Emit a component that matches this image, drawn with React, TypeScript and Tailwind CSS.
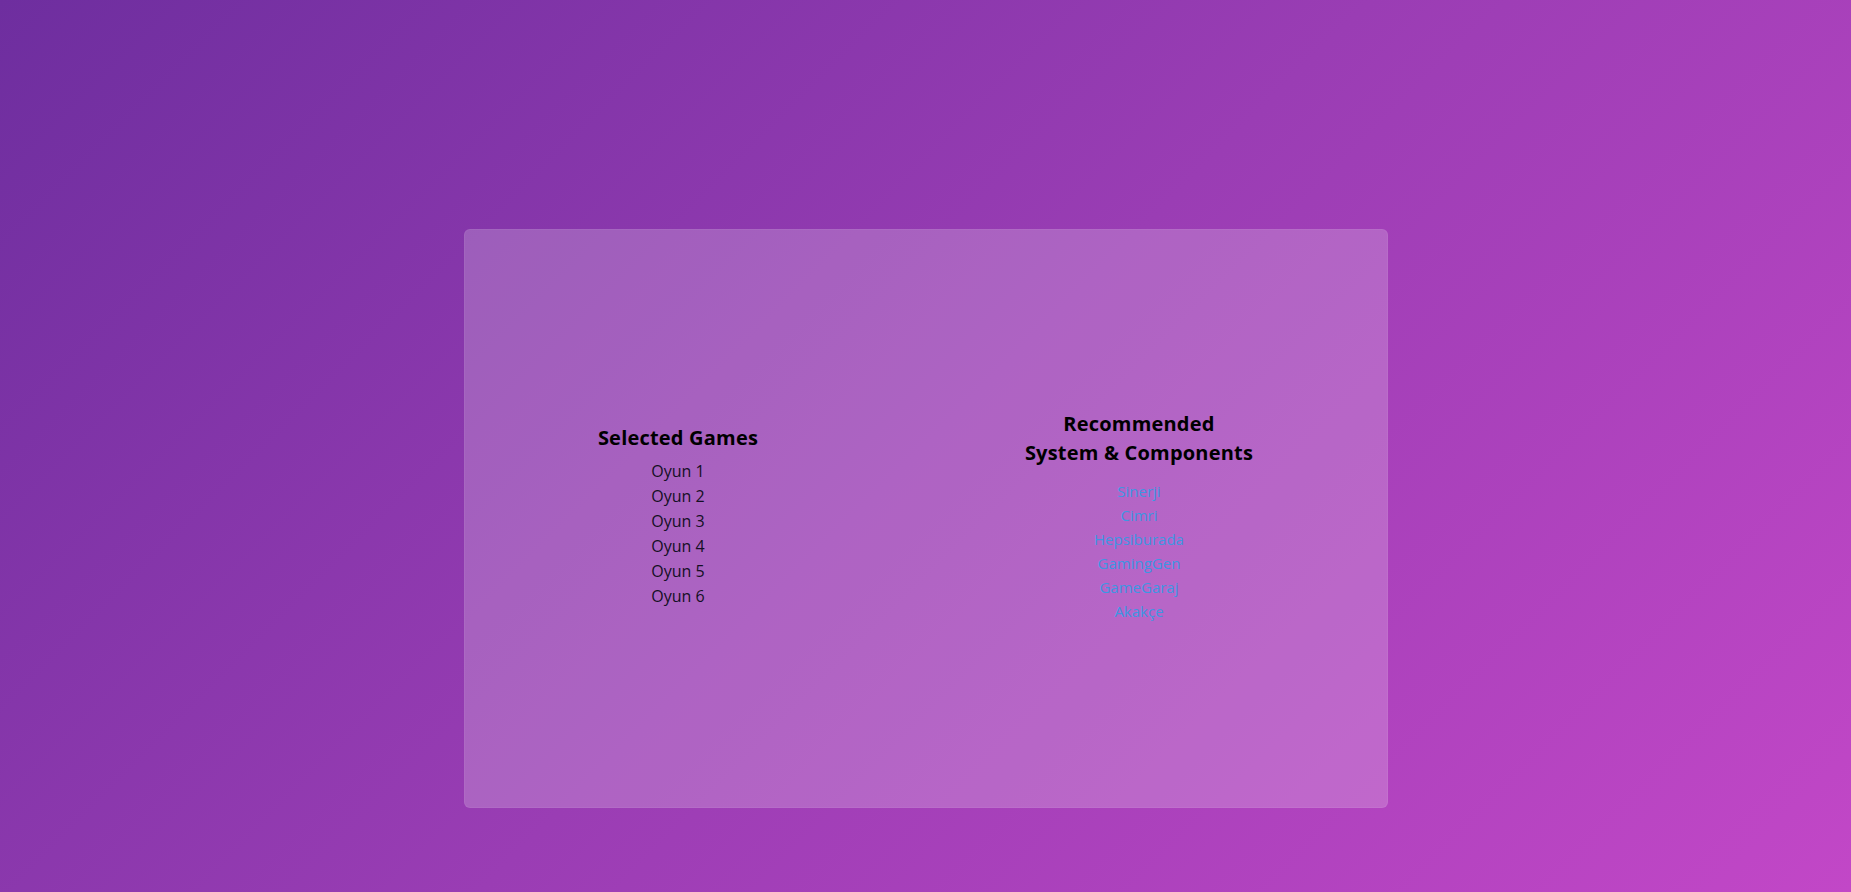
const GAMES = ['Oyun 1', 'Oyun 2', 'Oyun 3', 'Oyun 4', 'Oyun 5', 'Oyun 6']

const SHOPS = ['Sinerji', 'Cimri', 'Hepsiburada', 'GamingGen', 'GameGaraj', 'Akakçe']

export default function App() {
  return (
    <div
      className="min-h-screen w-full bg-[linear-gradient(135deg,#6e2e9f_0%,#9a3db4_50%,#c247c7_100%)] pt-[229px]"
      style={{ fontFamily: '"Open Sans", "Noto Sans", sans-serif' }}
    >
      <div className="mx-auto flex h-[579px] w-[924px] items-center justify-around rounded-md border border-white/5 bg-white/20 pb-[5px]">
        <div className="flex flex-col items-center">
          <h2 className="mb-[6px] text-[20px] font-bold leading-[30px] tracking-[0.2px] text-black">Selected Games</h2>
          <ul className="flex flex-col items-center text-[16px] leading-[25px] text-[#140f24]">
            {GAMES.map((g) => (
              <li key={g}>{g}</li>
            ))}
          </ul>
        </div>

        <div className="flex flex-col items-center">
          <h2 className="mb-[12px] text-center text-[20px] font-bold leading-[29px] tracking-[0.2px] text-black">
            Recommended
            <br />
            System &amp; Components
          </h2>
          <ul className="flex flex-col items-center text-[15px] leading-[24px] text-[#3d96e3]">
            {SHOPS.map((s) => (
              <li key={s}>
                <a href="#">{s}</a>
              </li>
            ))}
          </ul>
        </div>
      </div>
    </div>
  )
}
